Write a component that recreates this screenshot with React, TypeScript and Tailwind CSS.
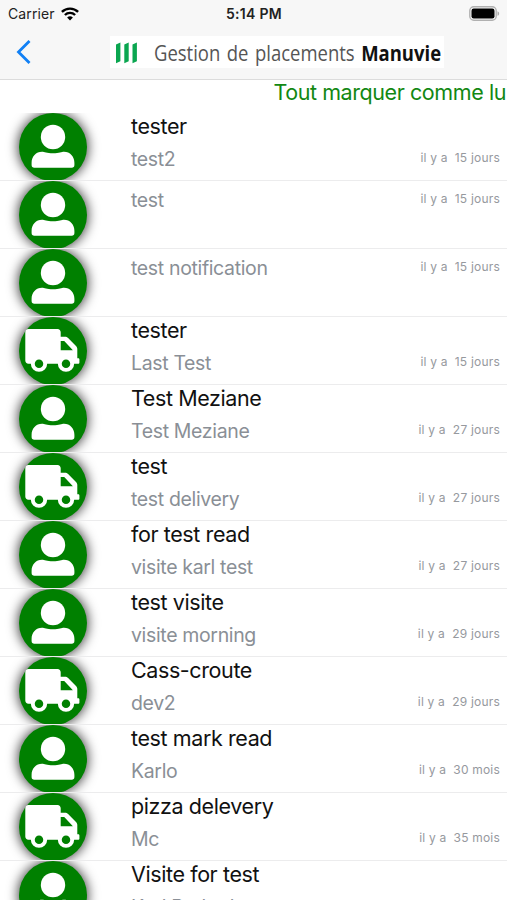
type Kind = 'person' | 'truck';

interface Notice {
  kind: Kind;
  title?: string;
  body: string;
  age: string;
}

const notices: Notice[] = [
  { kind: 'person', title: 'tester', body: 'test2', age: '15 jours' },
  { kind: 'person', body: 'test', age: '15 jours' },
  { kind: 'person', body: 'test notification', age: '15 jours' },
  { kind: 'truck', title: 'tester', body: 'Last Test', age: '15 jours' },
  { kind: 'person', title: 'Test Meziane', body: 'Test Meziane', age: '27 jours' },
  { kind: 'truck', title: 'test', body: 'test delivery', age: '27 jours' },
  { kind: 'person', title: 'for test read', body: 'visite karl test', age: '27 jours' },
  { kind: 'person', title: 'test visite', body: 'visite morning', age: '29 jours' },
  { kind: 'truck', title: 'Cass-croute', body: 'dev2', age: '29 jours' },
  { kind: 'person', title: 'test mark read', body: 'Karlo', age: '30 mois' },
  { kind: 'truck', title: 'pizza delevery', body: 'Mc', age: '35 mois' },
  { kind: 'person', title: 'Visite for test', body: 'Karl Barked', age: '35 mois' },
];

function PersonIcon() {
  return (
    <svg viewBox="0 0 68 68" className="size-[68px]" fill="white">
      <circle cx="34" cy="24" r="12.2" />
      <path d="M23 38.7c2.5 0 4.5 1.5 11 1.5s8.5-1.5 11-1.5c6 0 10.4 4.8 10.4 11v2.3c0 1.700-1 2.700-2.700 2.700H15.300c-1.700 0-2.700-1-2.700-2.700v-2.300c0-6.200 4.400-11 10.400-11z" />
    </svg>
  );
}

function TruckIcon() {
  return (
    <svg viewBox="0 0 68 68" className="size-[68px]" fill="white">
      <path
        fillRule="evenodd"
        d="M9.300 12h29.200c1.900 0 3.200 1.300 3.200 3.200v4.500h4.200c1.300 0 2.300.4 3.200 1.300l7.900 7.900c.9.900 1.300 1.900 1.300 3.200v9.200h.8c.8 0 1.300.5 1.300 1.300v2.800c0 .8-.5 1.300-1.300 1.300H9.500c-1.900 0-3.200-1.300-3.200-3.200V15.200c0-1.900 1.200-3.200 3-3.200zM41.700 24v9.200h12.200L45.700 24.400c-.3-.3-.6-.4-1-.4z"
      />
      <circle cx="20" cy="46.700" r="6.200" fill="#008000" stroke="white" strokeWidth="3.900" />
      <circle cx="47" cy="46.700" r="6.200" fill="#008000" stroke="white" strokeWidth="3.900" />
    </svg>
  );
}

function NoticeRow({ notice }: { notice: Notice }) {
  return (
    <li className="flex h-[68px] shrink-0 overflow-hidden border-b border-[#ececed] pl-[19px] pr-[7px]">
      <div className="size-[68px] shrink-0 rounded-full bg-[#008000] shadow-[0_0_12px_1px_rgba(0,0,0,0.75)]">
        {notice.kind === 'person' ? <PersonIcon /> : <TruckIcon />}
      </div>
      <div className="ml-[44px] min-w-0 flex-1">
        {notice.title && (
          <div className="h-[27px] whitespace-nowrap text-[21.5px] leading-[27px] tracking-[-0.4px] text-[#111]">
            {notice.title}
          </div>
        )}
        <div className={`flex items-start justify-between whitespace-nowrap ${notice.title ? 'pt-[6px]' : 'pt-[6px]'}`}>
          <span className="text-[19.5px] leading-[27px] tracking-[-0.35px] text-[#8a8f96]">{notice.body}</span>
          <span className="whitespace-pre text-[12px] leading-[24px] tracking-[0.2px] text-[#96999e]">{`il y a  ${notice.age}`}</span>
        </div>
      </div>
    </li>
  );
}

function StatusBar() {
  return (
    <div className="grid h-[27px] grid-cols-3 items-center pl-[8px] pr-[7px] text-[14px] text-[#222]">
      <div className="flex items-center gap-[6px]">
        <span className="tracking-[0.1px]">Carrier</span>
        <svg viewBox="0 0 18 14" className="h-[14px] w-[18px]" fill="none" stroke="black" strokeWidth="2.4">
          <path d="M.9 4.900a11.600 11.600 0 0 1 16.200 0M3.900 8a7.300 7.300 0 0 1 10.200 0" />
          <path d="M9 13.600 6.100 10.600a4.200 4.200 0 0 1 5.800 0z" fill="black" stroke="none" />
        </svg>
      </div>
      <span className="text-center font-semibold tracking-[0.3px]">5:14 PM</span>
      <svg viewBox="0 0 31 15" className="h-[15px] w-[31px] justify-self-end">
        <rect x=".8" y=".8" width="26.4" height="13.4" rx="4" fill="#f7f7f7" stroke="#b0b0b0" strokeWidth="1.4" />
        <rect x="2.5" y="2.5" width="23" height="10" rx="2.2" fill="black" />
        <path d="M28.5 5.200c2.200.8 2.200 3.800 0 4.600z" fill="#aaa" />
      </svg>
    </div>
  );
}

function NavBar() {
  return (
    <div className="flex h-[52px] items-start pl-[16px] pt-[9px]">
      <svg viewBox="0 0 16 26" className="mt-[3px] h-[26px] w-[16px]" fill="none" stroke="#1180f5" strokeWidth="2.8">
        <path d="M13.500 2 2.500 13l11 11" />
      </svg>
      <div className="ml-[78px] flex h-[32px] w-[334px] items-center whitespace-nowrap bg-white pl-[6px] font-['Open_Sans',sans-serif] text-[22px]">
        <svg viewBox="0 0 22 22" className="mt-px h-[22px] w-[22px] shrink-0" fill="#0aa650">
          <path d="M0 2.600 4.400.6v18.700L0 21.300zM8.300 2.600l4.400-2v18.700l-4.400 2zM16.500 2.600l4.400-2v18.700l-4.400 2z" />
        </svg>
        <div className="ml-[16px] w-[292px] shrink-0">
          <div className="w-max origin-left scale-x-[0.84] text-[#555] [word-spacing:2px]">
            Gestion de placements <b className="text-[#111]">Manuvie</b>
          </div>
        </div>
      </div>
    </div>
  );
}

export default function App() {
  return (
    <div className="flex h-[900px] w-[507px] flex-col overflow-hidden bg-white font-[Inter,sans-serif]">
      <header className="h-[80px] shrink-0 border-b border-[#dcdcdc] bg-[#f7f7f7]">
        <StatusBar />
        <NavBar />
      </header>
      <div className="flex h-[33px] shrink-0 justify-end pr-[1px]">
        <button className="h-[24px] whitespace-nowrap text-[21.5px] leading-[24px] tracking-[-0.42px] text-[#128812]">
          Tout marquer comme lu
        </button>
      </div>
      <ul className="flex flex-col">
        {notices.map((notice, i) => (
          <NoticeRow key={i} notice={notice} />
        ))}
      </ul>
    </div>
  );
}
